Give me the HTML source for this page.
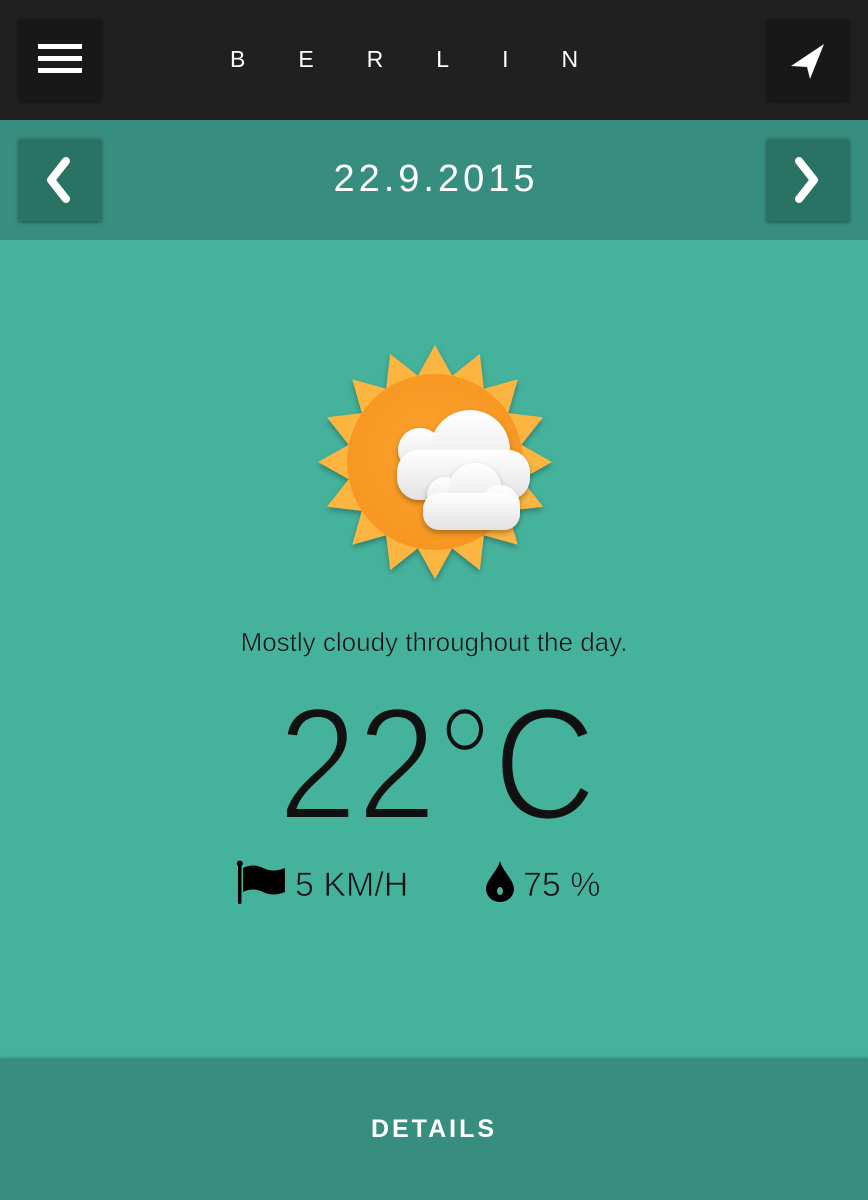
<!DOCTYPE html>
<html><head><meta charset="utf-8"><style>
*{margin:0;padding:0;box-sizing:border-box}
body{width:868px;height:1200px;overflow:hidden;font-family:"Liberation Sans",sans-serif;background:#45b29c;position:relative}
.top{position:absolute;left:0;top:0;width:868px;height:120px;background:#202020}
.date{position:absolute;left:0;top:120px;width:868px;height:120px;background:#378e7e}
.btn{position:absolute;width:82px;height:82px;box-shadow:0 1px 4px rgba(0,0,0,.5)}
.top .btn{background:#181818;top:19px}
.date .btn{background:#2a7364;top:19px}
.title{position:absolute;top:46px;left:230px;color:#fff;font-size:23px;letter-spacing:53px}
.dt{position:absolute;top:38px;width:868px;text-align:center;color:#fff;font-size:38px;letter-spacing:4px;padding-left:4px}
.desc{position:absolute;top:627px;width:868px;text-align:center;font-size:26px;color:#111;-webkit-text-stroke:0.6px #45b29c}
.temp{position:absolute;top:672px;left:278px;font-size:160px;color:#111;transform:scaleX(.89);transform-origin:left;-webkit-text-stroke:4px #45b29c}
.info{position:absolute;top:866px;font-size:34px;color:#111;-webkit-text-stroke:0.8px #45b29c}
.foot{position:absolute;left:0;top:1059px;width:868px;height:141px;background:#378e7e;box-shadow:0 -1px 3px rgba(0,0,0,.3)}
.foot span{position:absolute;top:56px;width:868px;text-align:center;color:#fff;font-weight:bold;font-size:25px;letter-spacing:3px}
</style></head><body>
<div class="top">
 <div class="btn" style="left:19px"><svg width="82" height="82"><rect x="19" y="25" width="44" height="5" fill="#fff"/><rect x="19" y="37" width="44" height="5" fill="#fff"/><rect x="19" y="49" width="44" height="5" fill="#fff"/></svg></div>
 <div class="title">BERLIN</div>
 <div class="btn" style="left:767px"><svg width="82" height="82"><path d="M57 25 L24 47 L40 48 L43 60 Z" fill="#fff"/></svg></div>
</div>
<div class="date">
 <div class="btn" style="left:19px"><svg width="82" height="82"><path d="M47 22 L32 41 L47 60" stroke="#fff" stroke-width="8" fill="none" stroke-linecap="round" stroke-linejoin="round"/></svg></div>
 <div class="dt">22.9.2015</div>
 <div class="btn" style="left:767px"><svg width="82" height="82"><path d="M32 22 L47 41 L32 60" stroke="#fff" stroke-width="8" fill="none" stroke-linecap="round" stroke-linejoin="round"/></svg></div>
</div>
<svg style="position:absolute;left:300px;top:330px" width="270" height="260">
 <defs><radialGradient id="g" cx="0.5" cy="0.45" r="0.55"><stop offset="0" stop-color="#fca12c"/><stop offset="1" stop-color="#f79722"/></radialGradient>
 <linearGradient id="c" x1="0" y1="0" x2="0" y2="1"><stop offset="0" stop-color="#fff"/><stop offset="1" stop-color="#e2e2e2"/></linearGradient>
 <filter id="s" x="-20%" y="-20%" width="140%" height="140%"><feDropShadow dx="0" dy="3" stdDeviation="3" flood-color="#000" flood-opacity=".3"/></filter></defs>
 <g filter="url(#s)"><polygon fill="#fbb540" points="" id="star"/></g>
 <circle cx="135" cy="132" r="88" fill="url(#g)"/>
 <g fill="url(#c)" filter="url(#s)">
  <circle cx="120" cy="120" r="22"/><circle cx="170" cy="120" r="40"/><circle cx="205" cy="145" r="25"/><rect x="97" y="120" width="133" height="50" rx="22"/>
 </g>
 <g fill="url(#c)" filter="url(#s)">
  <circle cx="145" cy="165" r="18"/><circle cx="175" cy="160" r="27"/><circle cx="200" cy="175" r="20"/><rect x="123" y="163" width="97" height="37" rx="16"/>
 </g>
</svg>
<script>
var p=[];for(var i=0;i<32;i++){var a=-Math.PI/2+i*Math.PI/16,r=i%2?88:117;p.push((135+r*Math.cos(a)).toFixed(1)+","+(132+r*Math.sin(a)).toFixed(1));}
document.getElementById("star").setAttribute("points",p.join(" "));
</script>
<div class="desc">Mostly cloudy throughout the day.</div>
<div class="temp">22°C</div>
<svg style="position:absolute;left:236px;top:860px" width="52" height="46"><rect x="2" y="3" width="3.5" height="41" rx="1.5" fill="#000"/><circle cx="3.8" cy="3.5" r="3" fill="#000"/><path d="M7 8 Q17 3 27 8 Q37 13 49 8 L49 32 Q37 37 27 32 Q17 27 7 32 Z" fill="#000"/></svg>
<div class="info" style="left:295px">5 KM/H</div>
<svg style="position:absolute;left:485px;top:860px" width="32" height="42"><path d="M15 1 C12 12 1 20 1 29 A14 13 0 0 0 29 29 C29 20 18 12 15 1 Z" fill="#000"/><ellipse cx="15" cy="31" rx="3" ry="4" fill="#45b29c"/></svg>
<div class="info" style="left:523px">75 %</div>
<div class="foot"><span>DETAILS</span></div>
</body></html>
